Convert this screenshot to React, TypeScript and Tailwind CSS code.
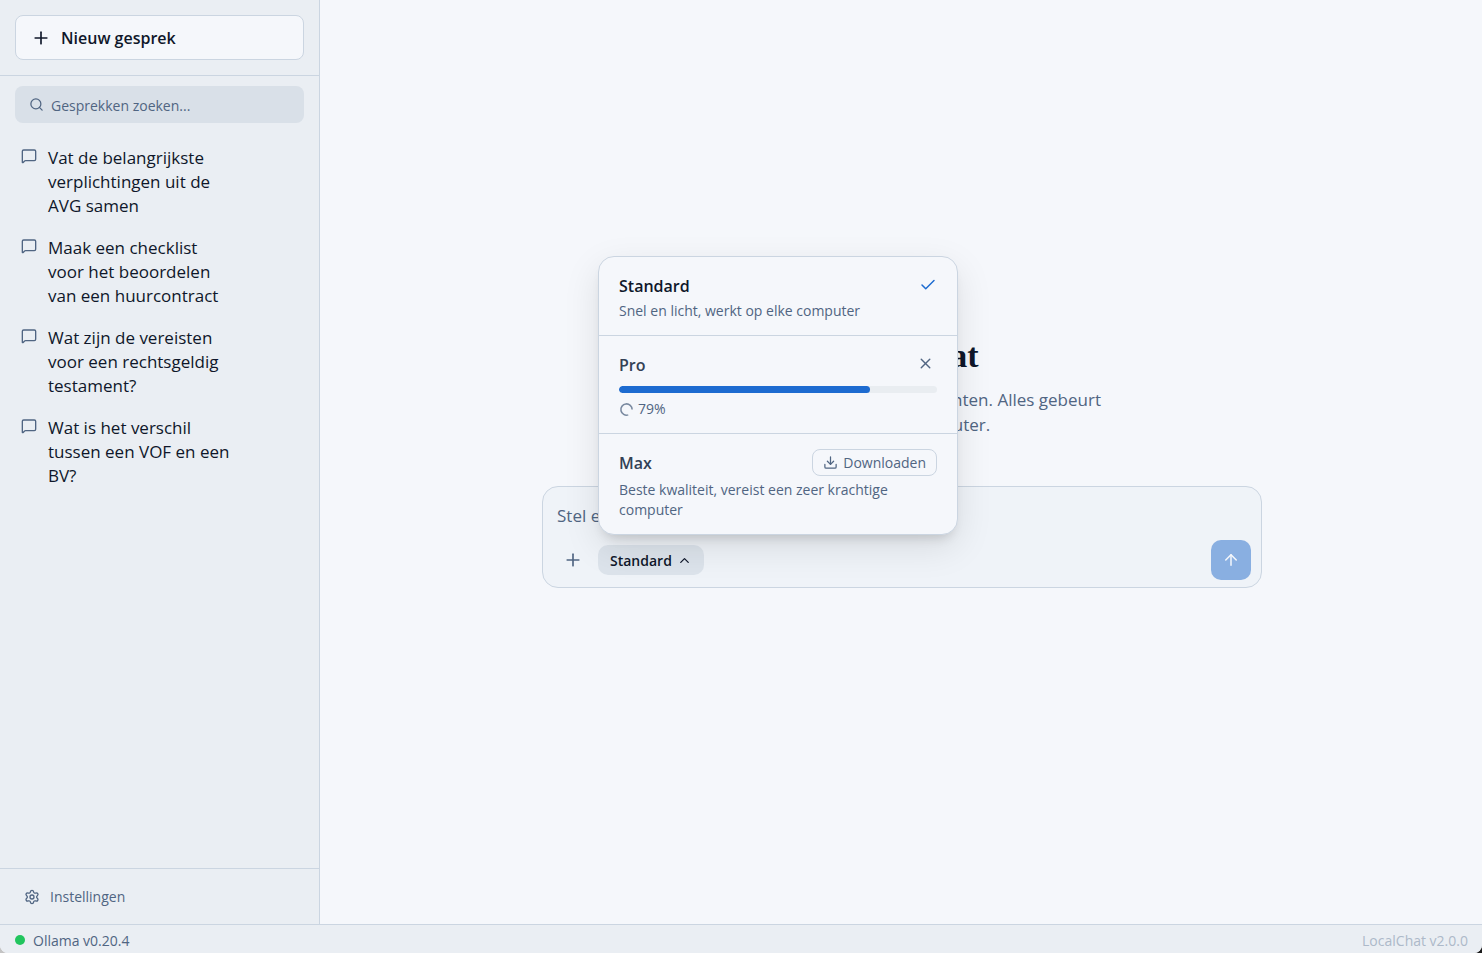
import React, { useState } from 'react';
import { ArrowUp, Check, ChevronUp, Download, MessageSquare, Plus, Search, Settings, X } from 'lucide-react';

const CONVERSATIONS = [
  'Vat de belangrijkste verplichtingen uit de AVG samen',
  'Maak een checklist voor het beoordelen van een huurcontract',
  'Wat zijn de vereisten voor een rechtsgeldig testament?',
  'Wat is het verschil tussen een VOF en een BV?',
];

const Sidebar: React.FC = () => {
  const [query, setQuery] = useState('');
  const visible = CONVERSATIONS.filter((title) => title.toLowerCase().includes(query.toLowerCase()));

  return (
    <aside className="flex w-80 shrink-0 flex-col border-r border-[#cbd5e1] bg-[#eaeef3]">
      <div className="border-b border-[#cbd5e1] p-[15px]">
        <button className="flex h-[45px] w-full items-center gap-[10px] rounded-lg border border-[#cbd5e1] bg-[#f5f7fb] px-[15px] text-[16px] font-semibold text-[#0f172a]">
          <Plus size={20} />
          Nieuw gesprek
        </button>
      </div>

      <div className="px-[15px] pt-[10px]">
        <label className="flex h-[37px] items-center gap-[7px] rounded-lg bg-[#d9e0e8] px-[14px] text-[#506582]">
          <Search size={15} className="shrink-0" />
          <input
            type="text"
            aria-label="Gesprekken zoeken"
            placeholder="Gesprekken zoeken..."
            value={query}
            onChange={(e) => setQuery(e.target.value)}
            className="min-w-0 flex-1 bg-transparent pt-[2px] text-[14px] outline-none placeholder:text-[#506582]"
          />
        </label>
      </div>

      <nav className="flex-1 overflow-y-auto px-[10px] pt-[14px]">
        {visible.map((title) => (
          <button
            key={title}
            className="flex w-full items-start gap-[11px] rounded-lg py-[9px] pr-[75px] pl-[11px] text-left text-[17px] leading-6 text-[#0f172a]"
          >
            <MessageSquare size={16} className="mt-[2px] shrink-0 text-[#506582]" />
            <span>{title}</span>
          </button>
        ))}
      </nav>

      <div className="border-t border-[#cbd5e1] px-[10px] py-[10px]">
        <button className="flex h-[35px] w-full items-center gap-[10px] rounded-lg px-[14px] text-[14px] text-[#506582]">
          <Settings size={16} />
          Instellingen
        </button>
      </div>
    </aside>
  );
};

const ModelMenu: React.FC = () => {
  const progress = 79;

  return (
    <div className="absolute bottom-full left-0 mb-[10px] w-[360px] rounded-2xl border border-[#cbd5e1] bg-[#f5f7fb] text-[14px] leading-5 text-[#506582] shadow-[0_12px_36px_rgba(0,0,0,0.1),0_8px_12px_-6px_rgba(0,0,0,0.16)]">
      <div className="px-5 pt-4 pb-[14px]">
        <div className="flex h-[26px] items-center justify-between">
          <span className="text-[16px] font-semibold text-[#0f172a]">Standard</span>
          <Check size={18} className="mb-[2px] text-[#1d6bd0]" />
        </div>
        <p className="mt-[2px]">Snel en licht, werkt op elke computer</p>
      </div>

      <div className="border-t border-[#cbd5e1] px-5 pt-4 pb-[14px]">
        <div className="flex h-[26px] items-center justify-between">
          <span className="text-[16px] font-semibold text-[#334155]">Pro</span>
          <button aria-label="Download annuleren" className="mb-1 p-[3px]">
            <X size={17} />
          </button>
        </div>
        <div className="mt-2 h-[7px] overflow-hidden rounded-full bg-[#e9edf1]">
          <div className="h-full rounded-full bg-[#1d6bd0]" style={{ width: `${progress}%` }} />
        </div>
        <div className="mt-[6px] flex items-center gap-1">
          <svg viewBox="0 0 24 24" fill="none" stroke="currentColor" strokeWidth="2.5" className="size-[15px] opacity-75">
            <path d="M21 12a9 9 0 1 0-6.2 8.6" />
          </svg>
          <span>{progress}%</span>
        </div>
      </div>

      <div className="border-t border-[#cbd5e1] px-5 pt-[15px] pb-[14px]">
        <div className="flex items-center justify-between">
          <span className="text-[16px] font-semibold text-[#334155]">Max</span>
          <button className="flex h-[27px] items-center gap-[5px] rounded-lg border border-[#cbd5e1] px-[10px]">
            <Download size={15} />
            Downloaden
          </button>
        </div>
        <p className="mt-1">Beste kwaliteit, vereist een zeer krachtige computer</p>
      </div>
    </div>
  );
};

const Composer: React.FC = () => {
  const [message, setMessage] = useState('');
  const [menuOpen, setMenuOpen] = useState(true);

  return (
    <div className="w-full rounded-2xl border border-[#cbd5e1] bg-[#eff3f8]">
      <textarea
        rows={1}
        aria-label="Bericht"
        placeholder="Stel een vraag..."
        value={message}
        onChange={(e) => setMessage(e.target.value)}
        className="block h-[53px] w-full resize-none bg-transparent px-[14px] pt-4 pb-3 text-[17px] leading-[25px] text-[#0f172a] outline-none placeholder:text-[#506582]"
      />
      <div className="flex items-center gap-[10px] pr-[10px] pb-[7px] pl-[15px]">
        <button aria-label="Bestand toevoegen" className="flex size-[30px] items-center justify-center text-[#506582]">
          <Plus size={20} />
        </button>
        <div className="relative">
          <button
            aria-expanded={menuOpen}
            onClick={() => setMenuOpen(!menuOpen)}
            className="flex h-[30px] items-center gap-[5px] rounded-[10px] bg-[#dce3eb] px-3 text-[14px] font-semibold text-[#0f172a]"
          >
            Standard
            <ChevronUp size={15} />
          </button>
          {menuOpen && <ModelMenu />}
        </div>
        <button
          aria-label="Versturen"
          className="ml-auto flex size-10 items-center justify-center rounded-[10px] bg-[#89afe1] text-[#f5f7fb]"
        >
          <ArrowUp size={18} />
        </button>
      </div>
    </div>
  );
};

const App: React.FC = () => {
  return (
    <div className="h-screen bg-linear-to-r from-[#c4c4c4] to-[#1c1c1c]">
      <div className="flex h-full flex-col overflow-hidden rounded-b-lg bg-[#f5f7fb] font-['Segoe_UI','Open_Sans',sans-serif]">
        <div className="flex min-h-0 flex-1">
          <Sidebar />

          <main className="flex min-w-0 flex-1 flex-col items-center justify-center pr-6 pl-[26px]">
            <div className="flex w-full max-w-[720px] flex-col items-center">
              <h1 className="font-['Liberation_Serif',serif] text-[34px] leading-10 font-bold text-[#0f172a]">LocalChat</h1>
              <p className="mt-[11px] mb-[49px] max-w-[420px] text-center text-[17px] leading-[25px] text-[#506582]">
                Stel vragen en verwerk documenten. Alles gebeurt lokaal op je computer.
              </p>
              <Composer />
            </div>
          </main>
        </div>

        <footer className="flex h-[29px] shrink-0 items-center justify-between border-t border-[#cbd5e1] bg-[#eaeef3] pt-[2px] pr-[14px] pl-[15px] text-[14px] text-[#506582]">
          <div className="flex items-center gap-2">
            <span className="size-[10px] rounded-full bg-[#22c55e]" />
            Ollama v0.20.4
          </div>
          <span className="text-[#adb9c9]">LocalChat v2.0.0</span>
        </footer>
      </div>
    </div>
  );
};

export default App;
